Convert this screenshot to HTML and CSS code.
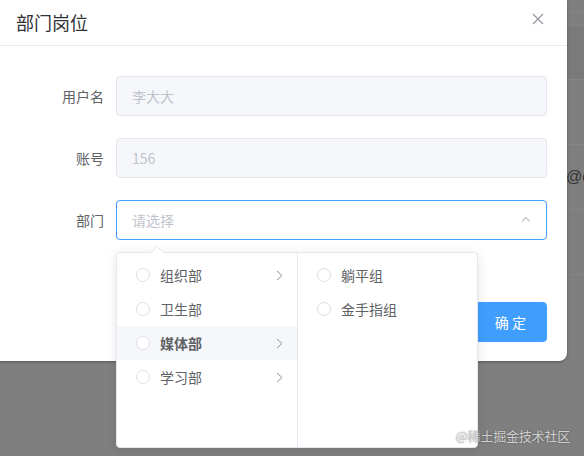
FILE: index.html
```html
<!DOCTYPE html>
<html lang="zh">
<head>
<meta charset="utf-8">
<title>部门岗位</title>
<link rel="stylesheet" href="styles.css">
</head>
<body>
<div class="screen">
  <div class="dialog">
    <div class="dialog-header">
      <span class="dialog-title">部门岗位</span>
      <svg class="close" width="12" height="12" viewBox="0 0 12 12"><path d="M1 1L11 11M11 1L1 11" stroke="#909399" stroke-width="1.1" fill="none"/></svg>
    </div>
    <div class="dialog-body">
      <div class="form-item">
        <label class="form-label">用户名</label>
        <div class="input disabled">李大大</div>
      </div>
      <div class="form-item">
        <label class="form-label">账号</label>
        <div class="input disabled">156</div>
      </div>
      <div class="form-item">
        <label class="form-label">部门</label>
        <div class="input select">
          <span class="placeholder">请选择</span>
          <svg class="select-arrow" width="10" height="6" viewBox="0 0 10 6"><path d="M1 5.5L5 1.5L9 5.5" stroke="#c0c4cc" stroke-width="1.1" fill="none"/></svg>
        </div>
      </div>
    </div>
    <div class="dialog-footer">
      <button class="btn">取 消</button>
      <button class="btn primary">确 定</button>
    </div>

    <div class="cascader">
      <span class="popper-arrow"></span>
      <ul class="panel">
        <li class="node"><span class="radio"></span><span class="node-label">组织部</span><svg class="node-arrow" width="7" height="11" viewBox="0 0 7 11"><path d="M1 1L6 5.5L1 10" stroke="#909399" stroke-width="1" fill="none"/></svg></li>
        <li class="node"><span class="radio"></span><span class="node-label">卫生部</span></li>
        <li class="node active"><span class="radio"></span><span class="node-label">媒体部</span><svg class="node-arrow" width="7" height="11" viewBox="0 0 7 11"><path d="M1 1L6 5.5L1 10" stroke="#909399" stroke-width="1" fill="none"/></svg></li>
        <li class="node"><span class="radio"></span><span class="node-label">学习部</span><svg class="node-arrow" width="7" height="11" viewBox="0 0 7 11"><path d="M1 1L6 5.5L1 10" stroke="#909399" stroke-width="1" fill="none"/></svg></li>
      </ul>
      <ul class="panel">
        <li class="node"><span class="radio"></span><span class="node-label">躺平组</span></li>
        <li class="node"><span class="radio"></span><span class="node-label">金手指组</span></li>
      </ul>
    </div>
  </div>
  <div class="bg-strip">
    <div class="bg-top"></div>
    <div class="bg-head"></div>
    <div class="bg-row"></div>
    <div class="bg-row"><span class="bg-text">@c</span></div>
    <div class="bg-row"></div>
    <div class="bg-rest"></div>
  </div>
</div>
<div class="watermark">@稀土掘金技术社区</div>
</body>
</html>
```

FILE: styles.css
```css
* { box-sizing: border-box; }
html, body {
  margin: 0;
  padding: 0;
  width: 584px;
  height: 456px;
  overflow: hidden;
  background: #7f7f7f;
  font-family: "Noto Sans CJK SC", "Liberation Sans", sans-serif;
}
.screen {
  display: flex;
  align-items: flex-start;
  width: 584px;
  height: 456px;
}
.dialog {
  position: relative;
  flex: 0 0 573px;
  margin-left: -6px;
  background: #fff;
  border-radius: 0 0 8px 8px;
  box-shadow: 0 1px 3px rgba(0, 0, 0, 0.3);
}
.dialog-header {
  height: 46px;
  display: flex;
  justify-content: space-between;
  align-items: center;
  padding: 0 23px 0 22px;
  border-bottom: 1px solid #e8eaec;
}
.dialog-title {
  font-size: 18px;
  color: #303133;
  line-height: 24px;
  margin-top: -1px;
}
.close {
  align-self: flex-start;
  margin-top: 13px;
}
.dialog-body {
  padding: 30px 20px 8px 22px;
}
.form-item {
  display: flex;
  align-items: center;
  height: 40px;
  margin-bottom: 22px;
}
.form-item:last-child {
  margin-bottom: 44px;
}
.form-label {
  flex: 0 0 100px;
  text-align: right;
  padding-right: 12px;
  font-size: 14px;
  color: #606266;
}
.input {
  flex: 1;
  height: 40px;
  border: 1px solid #dcdfe6;
  border-radius: 4px;
  padding: 0 15px;
  display: flex;
  align-items: center;
  font-size: 14px;
  color: #606266;
}
.input.disabled {
  background: #f5f7fa;
  border-color: #e4e7ed;
  color: #c0c4cc;
}
.input.select {
  border-color: #409eff;
  justify-content: space-between;
}
.placeholder { color: #c0c4cc; }
.select-arrow { margin-top: -2px; }
.dialog-footer {
  display: flex;
  justify-content: flex-end;
  gap: 10px;
  padding: 10px 20px 19px 20px;
}
.btn {
  height: 40px;
  padding: 0 20px;
  font-family: inherit;
  font-size: 14px;
  border-radius: 4px;
  border: 1px solid #dcdfe6;
  background: #fff;
  color: #606266;
}
.btn.primary {
  background: #409eff;
  border-color: #409eff;
  color: #fff;
}
.cascader {
  position: absolute;
  left: 122px;
  top: 252px;
  width: 362px;
  height: 196px;
  display: flex;
  background: #fff;
  border: 1px solid #e4e7ed;
  border-radius: 4px;
  box-shadow: 0 2px 12px rgba(0, 0, 0, 0.1);
}
.popper-arrow {
  position: absolute;
  left: 34px;
  top: -7px;
  width: 0;
  height: 0;
  border-left: 6px solid transparent;
  border-right: 6px solid transparent;
  border-bottom: 6px solid #e4e7ed;
}
.popper-arrow::after {
  content: "";
  position: absolute;
  left: -6px;
  top: 1px;
  border-left: 6px solid transparent;
  border-right: 6px solid transparent;
  border-bottom: 6px solid #fff;
}
.panel {
  list-style: none;
  margin: 0;
  padding: 5px 0;
  width: 180px;
  height: 100%;
}
.panel + .panel {
  border-left: 1px solid #e4e7ed;
}
.node {
  position: relative;
  display: flex;
  align-items: center;
  height: 34px;
  padding: 0 30px 0 19px;
  font-size: 14px;
  color: #606266;
}
.node.active {
  background: #f5f7fa;
  font-weight: bold;
}
.radio {
  width: 14px;
  height: 14px;
  border: 1px solid #dcdfe6;
  border-radius: 50%;
  background: #fff;
  flex: 0 0 14px;
}
.node-label {
  padding: 0 10px;
}
.node-arrow {
  position: absolute;
  right: 14px;
  top: 12px;
}
.bg-strip {
  flex: 1;
  display: flex;
  flex-direction: column;
  height: 456px;
  overflow: hidden;
}
.bg-top {
  height: 27px;
  background: linear-gradient(#7f7f7f 11px, #868686 11px, #868686 12px, #7f7f7f 12px);
}
.bg-head {
  height: 53px;
  background: #7a7a7a;
  border-bottom: 1px solid #868686;
}
.bg-row {
  height: 65px;
  border-bottom: 1px solid #868686;
  display: flex;
  align-items: center;
}
.bg-text {
  font-family: "Liberation Sans", sans-serif;
  font-size: 16px;
  color: #333;
  white-space: nowrap;
  margin-left: -1px;
}
.bg-rest { flex: 1; }
.watermark {
  position: absolute;
  right: 14px;
  bottom: 11px;
  font-size: 13px;
  color: #cfcfcf;
  text-shadow: 0 0 2px rgba(0, 0, 0, 0.35);
  letter-spacing: -0.2px;
}
```
